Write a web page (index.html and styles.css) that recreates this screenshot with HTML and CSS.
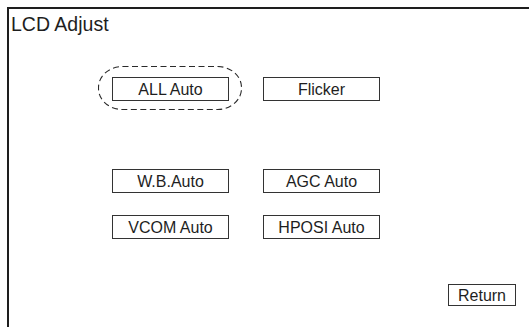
FILE: index.html
```html
<!DOCTYPE html>
<html lang="en">
<head>
    <meta charset="UTF-8">
    <title>LCD Adjust</title>
    <link rel="stylesheet" href="styles.css">
</head>
<body>

<div class="screen">
    <div class="title">LCD Adjust</div>

    <div class="row-main">
        <div class="selected">
            <svg class="focus-ring" width="144" height="44" viewBox="0 0 144 44">
                <rect x="0.5" y="0.5" width="143" height="43" rx="24" ry="21"/>
            </svg>
            <button class="btn">ALL Auto</button>
        </div>
        <button class="btn">Flicker</button>
    </div>

    <div class="row-auto">
        <button class="btn">W.B.Auto</button>
        <button class="btn">AGC Auto</button>
        <button class="btn">VCOM Auto</button>
        <button class="btn">HPOSI Auto</button>
    </div>

    <div class="footer">
        <button class="btn btn-return">Return</button>
    </div>
</div>

</body>
</html>
```

FILE: styles.css
```css
body {
    margin: 0;
    background: #fff;
    font-family: "Liberation Sans", Arial, sans-serif;
    color: #1e1e1e;
    overflow: hidden;
}
.screen {
    margin: 7px 0 0 7px;
    height: 318px;
    border-top: 2px solid #1e1e1e;
    border-left: 2px solid #1e1e1e;
    display: flex;
    flex-direction: column;
}
.title {
    font-size: 19.5px;
    line-height: 22px;
    padding: 4px 0 0 2px;
}
.row-main, .row-auto {
    display: grid;
    grid-template-columns: 117px 117px;
    column-gap: 34px;
    margin-left: 103px;
}
.row-main {
    margin-top: 42px;
}
.row-auto {
    margin-top: 68px;
    row-gap: 22px;
}
.selected {
    position: relative;
}
.focus-ring {
    position: absolute;
    left: -14px;
    top: -11px;
    pointer-events: none;
}
.focus-ring rect {
    fill: none;
    stroke: #2a2a2a;
    stroke-width: 1.1;
    stroke-dasharray: 6 3.5;
}
.btn {
    box-sizing: border-box;
    width: 117px;
    height: 24px;
    padding: 2px 0 0;
    background: #fff;
    border: 1px solid #333;
    border-radius: 0;
    font-family: inherit;
    font-size: 16px;
    color: #1e1e1e;
    text-align: center;
}
.footer {
    margin-top: auto;
    display: flex;
    justify-content: flex-end;
    padding: 0 13px 21px 0;
}
.btn-return {
    width: 68px;
    height: 22px;
}
```
